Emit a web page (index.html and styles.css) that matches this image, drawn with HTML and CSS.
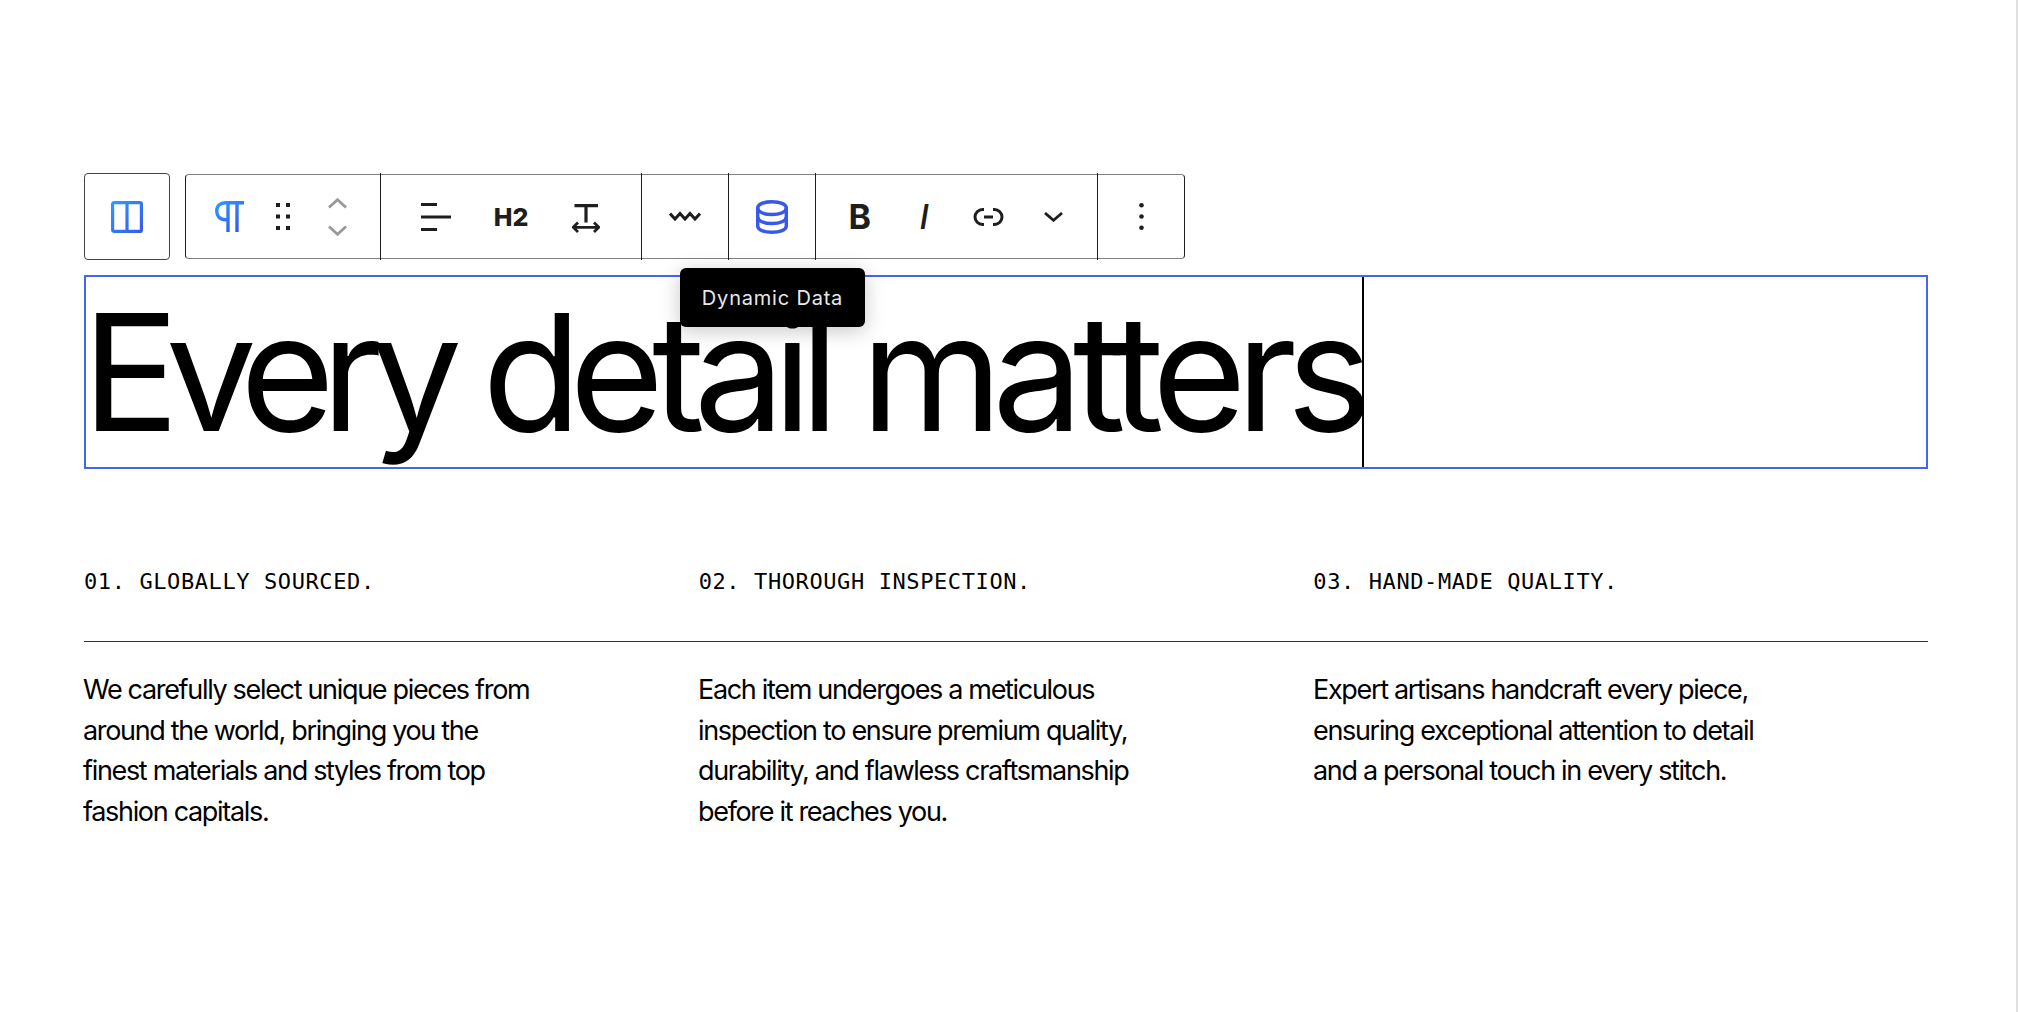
FILE: index.html
```html
<!DOCTYPE html>
<html lang="en">
<head>
    <meta charset="UTF-8">
    <meta name="viewport" content="width=device-width, initial-scale=1.0">
    <title>Every detail matters</title>
    <link rel="stylesheet" href="styles.css">
</head>
<body>
    <div class="page">
        <div class="toolbar-row">
            <div class="single-block">
                <svg width="32" height="32" viewBox="0 0 32 32" fill="none">
                    <defs>
                        <linearGradient id="blueA" gradientUnits="userSpaceOnUse" x1="0" y1="0" x2="32" y2="32">
                            <stop offset="0" stop-color="#2a9dff"/>
                            <stop offset="1" stop-color="#3858e9"/>
                        </linearGradient>
                    </defs>
                    <rect x="1.6" y="1.6" width="28.8" height="28.8" rx="1.5" stroke="url(#blueA)" stroke-width="3.2"/>
                    <path d="M16 1.5V30.5" stroke="url(#blueA)" stroke-width="3.2"/>
                </svg>
            </div>
            <div class="toolbar">
                <div class="tb-group tb-group-block">
                    <button class="tb-btn">
                        <svg width="29" height="31" viewBox="0 0 29 31" fill="none">
                            <defs>
                                <linearGradient id="blueB" gradientUnits="userSpaceOnUse" x1="0" y1="0" x2="24" y2="31">
                                    <stop offset="0" stop-color="#2a9dff"/>
                                    <stop offset="1" stop-color="#3858e9"/>
                                </linearGradient>
                            </defs>
                            <path d="M29 1.7H10.5C5 1.7 1.7 5 1.7 10S5 18.7 10.5 18.7H13M13 1.7V31M22 1.7V31" stroke="url(#blueB)" stroke-width="3.4"/>
                        </svg>
                    </button>
                    <button class="tb-btn">
                        <svg width="14" height="27" viewBox="0 0 14 27" fill="#1e1e1e">
                            <rect x="0" y="0" width="4" height="4"/><rect x="10" y="0" width="4" height="4"/>
                            <rect x="0" y="11.5" width="4" height="4"/><rect x="10" y="11.5" width="4" height="4"/>
                            <rect x="0" y="23" width="4" height="4"/><rect x="10" y="23" width="4" height="4"/>
                        </svg>
                    </button>
                    <button class="tb-btn">
                        <svg width="19" height="38" viewBox="0 0 19 38" fill="none" stroke="#999" stroke-width="2.8">
                            <path d="M1 9.5L9.5 1.7L18 9.5"/>
                            <path d="M1 28.5L9.5 36.3L18 28.5"/>
                        </svg>
                    </button>
                </div>
                <div class="tb-group tb-group-type">
                    <button class="tb-btn">
                        <svg width="30" height="28" viewBox="0 0 30 28" fill="none" stroke="#1e1e1e" stroke-width="2.8">
                            <path d="M0 1.5H16M0 14H30M0 26.5H16"/>
                        </svg>
                    </button>
                    <button class="tb-btn tb-heading">H2</button>
                    <button class="tb-btn">
                        <svg class="icon-width" width="28" height="29" viewBox="0 0 28 29" fill="none" stroke="#1e1e1e" stroke-width="3.2">
                            <path d="M2.5 1.6H26M14 1.6V18.5"/>
                            <path d="M1 23.3H27M6 18.5L1.2 23.3L6 28M22 18.5L26.8 23.3L22 28" stroke-width="2.8"/>
                        </svg>
                    </button>
                </div>
                <div class="tb-group tb-group-wide">
                    <button class="tb-btn">
                        <svg width="32" height="11" viewBox="0 0 32 11" fill="none" stroke="#1e1e1e" stroke-width="3">
                            <path d="M1 2.5L6 8L11 2.5L16 8L21 2.5L26 8L31 2.5"/>
                        </svg>
                    </button>
                </div>
                <div class="tb-group tb-group-wide tb-group-data">
                    <button class="tb-btn">
                        <svg width="32" height="34" viewBox="0 0 32 34" fill="none" stroke="#3858e9" stroke-width="3.4">
                            <path d="M1.7 8C1.7 4 8 1.7 16 1.7S30.3 4 30.3 8V26C30.3 30 24 32.3 16 32.3S1.7 30 1.7 26Z"/>
                            <path d="M1.7 8C1.7 12 8 14.5 16 14.5S30.3 12 30.3 8"/>
                            <path d="M1.7 17C1.7 21 8 23.5 16 23.5S30.3 21 30.3 17"/>
                        </svg>
                    </button>
                    <div class="tooltip">Dynamic Data</div>
                </div>
                <div class="tb-group tb-group-format">
                    <button class="tb-btn tb-bold">B</button>
                    <button class="tb-btn tb-italic">I</button>
                    <button class="tb-btn">
                        <svg width="31" height="18" viewBox="0 0 31 18" fill="none" stroke="#1e1e1e" stroke-width="3">
                            <path d="M11 1.5H9.5A7.5 7.5 0 0 0 9.5 16.5H11"/>
                            <path d="M20 1.5H21.5A7.5 7.5 0 0 1 21.5 16.5H20"/>
                            <path d="M11 9H20"/>
                        </svg>
                    </button>
                    <button class="tb-btn">
                        <svg width="19" height="10" viewBox="0 0 19 10" fill="none" stroke="#1e1e1e" stroke-width="2.8">
                            <path d="M1 1L9.5 8.3L18 1"/>
                        </svg>
                    </button>
                </div>
                <div class="tb-group tb-group-last">
                    <button class="tb-btn">
                        <svg width="5" height="27" viewBox="0 0 5 27" fill="#1e1e1e">
                            <circle cx="2.5" cy="2.3" r="2.3"/>
                            <circle cx="2.5" cy="13.5" r="2.3"/>
                            <circle cx="2.5" cy="24.7" r="2.3"/>
                        </svg>
                    </button>
                </div>
            </div>
        </div>

        <h1 class="headline"><span class="headline-text"><span class="word-tight">Every</span> detail <span class="word-loose">matters</span></span></h1>

        <div class="features features-labels">
            <div class="feature-label">01. GLOBALLY SOURCED.</div>
            <div class="feature-label">02. THOROUGH INSPECTION.</div>
            <div class="feature-label">03. HAND-MADE QUALITY.</div>
        </div>
        <hr class="divider">
        <div class="features features-copy">
            <p class="feature-text">We carefully select unique pieces from around the world, bringing you the finest materials and styles from top fashion capitals.</p>
            <p class="feature-text">Each item undergoes a meticulous inspection to ensure premium quality, durability, and flawless craftsmanship before it reaches you.</p>
            <p class="feature-text">Expert artisans handcraft every piece, ensuring exceptional attention to detail and a personal touch in every stitch.</p>
        </div>
    </div>
</body>
</html>
```

FILE: styles.css
```css
* {
    box-sizing: border-box;
}
body {
    margin: 0;
    background: #ffffff;
    color: #000000;
    font-family: 'Inter', sans-serif;
}
.page {
    height: 1012px;
    padding: 173px 88px 0 84px;
    border-right: 2px solid #e0e0e0;
    overflow: hidden;
}
.toolbar-row {
    display: flex;
    align-items: center;
    gap: 15px;
}
.single-block {
    width: 86px;
    height: 87px;
    border: 1px solid #444;
    border-radius: 4px;
    display: flex;
    align-items: center;
    justify-content: center;
}
.toolbar {
    display: flex;
    width: 1000px;
    height: 85px;
    border: 1px solid #1e1e1e;
    border-top-color: #808080;
    border-bottom-color: #808080;
    border-radius: 4px;
}
.tb-group {
    display: flex;
    justify-content: center;
    margin: -2px 0;
    border-right: 1px solid #1e1e1e;
    position: relative;
}
.tb-group-block {
    width: 195px;
}
.tb-group-block .tb-btn {
    width: 54px;
}
.tb-group-type {
    width: 261px;
}
.tb-group-type .tb-btn {
    width: 75px;
}
.tb-group-wide {
    width: 87px;
}
.tb-group-format {
    width: 282px;
}
.tb-group-format .tb-btn {
    width: 64.5px;
}
.tb-group-last {
    width: 86px;
    border-right: none;
}
.tb-btn {
    width: 100%;
    padding: 0;
    border: none;
    background: none;
    color: #1e1e1e;
    font-family: 'Inter', sans-serif;
    display: flex;
    align-items: center;
    justify-content: center;
}
.tb-heading {
    font-size: 25px;
    font-weight: 800;
}
.tb-bold {
    font-size: 34px;
    font-weight: 700;
}
.tb-italic {
    font-size: 34px;
    font-style: italic;
    font-weight: 500;
}
.icon-width {
    margin-top: 4px;
}
.tooltip {
    position: absolute;
    top: 95px;
    left: -49px;
    width: 185px;
    height: 59px;
    background: #000000;
    color: #e8e8e8;
    border-radius: 6px;
    box-shadow: 0 4px 20px rgba(0, 0, 0, 0.22);
    font-size: 20px;
    letter-spacing: 0.8px;
    display: flex;
    align-items: center;
    justify-content: center;
}
.headline {
    margin: 15px 0 0;
    height: 194px;
    border: 2px solid #4766ee;
    font-size: 162px;
    font-weight: 400;
    line-height: 190px;
    letter-spacing: -12px;
    white-space: nowrap;
}
.headline-text {
    display: inline-block;
    height: 190px;
    margin-left: -4px;
    border-right: 2px solid #000000;
}
.word-tight {
    letter-spacing: -13.5px;
}
.word-loose {
    letter-spacing: -10.5px;
}
.features {
    display: grid;
    grid-template-columns: repeat(3, 1fr);
}
.features-labels {
    margin-top: 100px;
}
.feature-label {
    font-family: 'DejaVu Sans Mono', monospace;
    font-size: 22px;
    letter-spacing: 0.6px;
    line-height: 26px;
}
.divider {
    margin: 46px 0 0;
    border: none;
    border-top: 1px solid #333;
}
.features-copy {
    margin-left: -1px;
}
.feature-text {
    margin: 28px 0 0;
    max-width: 460px;
    font-size: 27px;
    line-height: 40.5px;
    letter-spacing: -0.049em;
}
```
